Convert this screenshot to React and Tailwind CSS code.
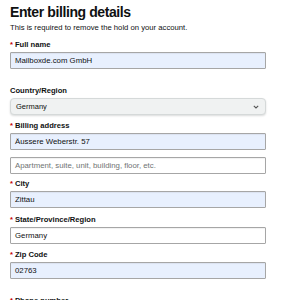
import React from "react";

const Label = ({ children, req = true, className = "" }) => (
  <div className={`h-[10px] leading-[10px] text-[7.6px] font-bold text-[#0f1111] ${className}`}>
    {req && <span className="text-[#c40000] mr-[2px]">*</span>}
    {children}
  </div>
);

const Input = ({ value, placeholder, filled = true, className = "" }) => (
  <div
    className={`h-[17px] w-[256px] border rounded-[1px] pl-[4px] flex items-center text-[7.8px] ${
      filled
        ? "bg-[#e8f0fe] border-[#a6a6a6] text-[#0f1111]"
        : "bg-white border-[#a6a6a6] text-[#6f7373]"
    } shadow-[inset_0_1px_1px_rgba(0,0,0,0.06)] ${className}`}
  >
    {value || placeholder}
  </div>
);

export default function App() {
  return (
    <div
      className="w-[293px] h-[300px] bg-white overflow-hidden pl-[10px]"
      style={{ fontFamily: '"Liberation Sans", Arial, sans-serif' }}
    >
      <div className="pt-[2px] h-[22px] leading-[20px] text-[14px] font-bold text-[#0f1111] tracking-[-0.4px]">
        Enter billing details
      </div>
      <div className="mt-[1px] h-[10px] leading-[10px] text-[7.7px] text-[#0f1111]">
        This is required to remove the hold on your account.
      </div>

      <Label className="mt-[7px]">Full name</Label>
      <Input className="mt-[2px]" value="Mailboxde.com GmbH" />

      <Label req={false} className="mt-[17px]">Country/Region</Label>
      <div className="mt-[2px] h-[17px] w-[256px] rounded-[4px] border border-[#d5d9d9] bg-[#f0f2f2] shadow-[0_1px_2px_rgba(15,17,17,0.15)] flex items-center justify-between pl-[5px] pr-[6px] text-[7.5px] text-[#0f1111]">
        <span>Germany</span>
        <svg width="6" height="4" viewBox="0 0 6 4" className="mt-[1px]">
          <path d="M0.8 0.8 L3 3 L5.2 0.8" stroke="#555" strokeWidth="1.1" fill="none" />
        </svg>
      </div>

      <Label className="mt-[6px]">Billing address</Label>
      <Input className="mt-[2px]" value="Äussere Weberstr. 57" />
      <Input className="mt-[7px]" filled={false} placeholder="Apartment, suite, unit, building, floor, etc." />

      <Label className="mt-[5px]">City</Label>
      <Input className="mt-[2px]" value="Zittau" />

      <Label className="mt-[7px]">State/Province/Region</Label>
      <Input className="mt-[2px] !bg-white" value="Germany" />

      <Label className="mt-[6px]">Zip Code</Label>
      <Input className="mt-[2px]" value="02763" />

      <Label className="mt-[17px]">Phone number</Label>
    </div>
  );
}
